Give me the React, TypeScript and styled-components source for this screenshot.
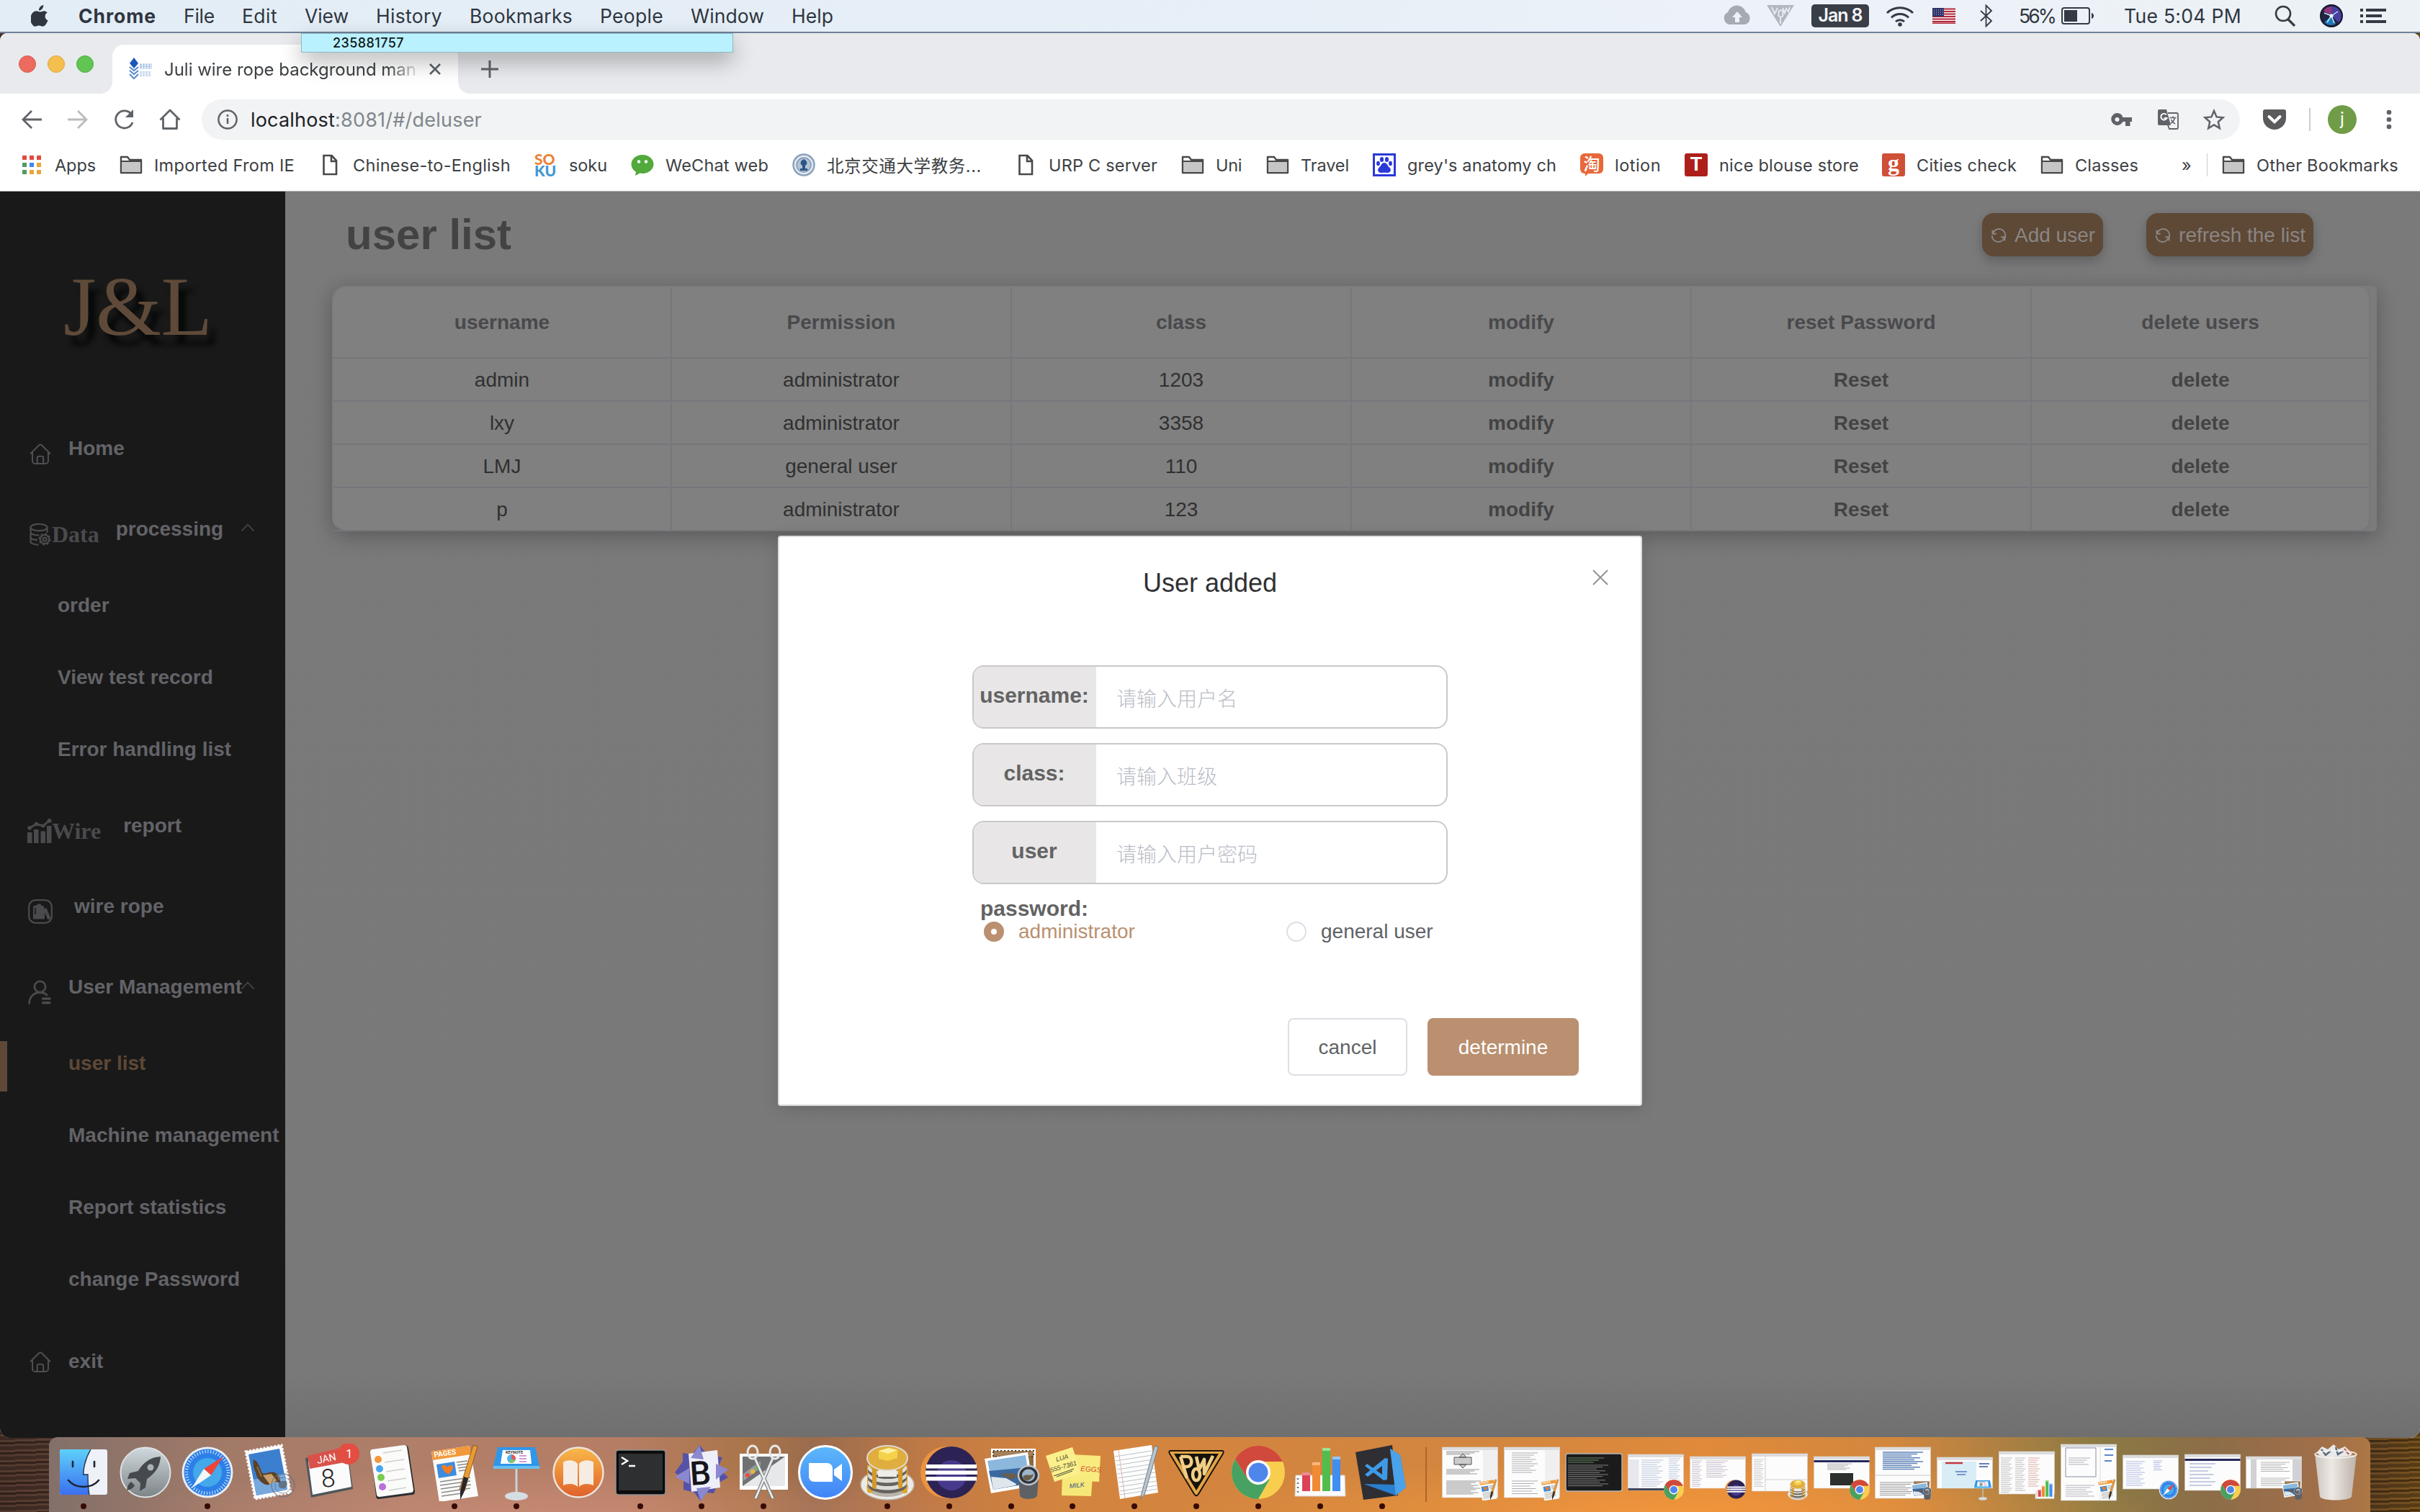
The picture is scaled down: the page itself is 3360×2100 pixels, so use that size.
import React, { useLayoutEffect, useRef } from "react";
import styled, { createGlobalStyle, css } from "styled-components";

const GlobalStyle = createGlobalStyle`
  *, *::before, *::after { box-sizing: border-box; }
  html, body { margin: 0; padding: 0; }
  body { width: 3360px; height: 2100px; overflow: hidden; font-family: "Liberation Sans", Arial, sans-serif; }
`;

const uiFont = `Inter, Roboto, "Noto Sans CJK SC", sans-serif`;
const pageFont = `"Liberation Sans", Arial, "Noto Sans CJK SC", sans-serif`;

/* Text that is tracked so that it fills a known column width */
const FitSpan = styled.span<{ $w: number }>`
  display: block;
  flex: none;
  width: ${(p) => p.$w}px;
  white-space: nowrap;
`;
function Fit({ w, children }: { w: number; children: string }) {
  const ref = useRef<HTMLSpanElement>(null);
  useLayoutEffect(() => {
    const el = ref.current;
    if (!el) return;
    el.style.letterSpacing = "0px";
    const range = document.createRange();
    range.selectNodeContents(el);
    const natural = range.getBoundingClientRect().width;
    el.style.letterSpacing = `${(w - natural) / children.length}px`;
  }, [w, children]);
  return (
    <FitSpan ref={ref} $w={w}>
      {children}
    </FitSpan>
  );
}

/* ---------- desktop ---------- */
const Desktop = styled.div`
  width: 3360px;
  height: 2100px;
  overflow: hidden;
  display: flex;
  flex-direction: column;
  background:
    repeating-linear-gradient(178deg, rgba(20, 8, 4, 0.5) 0 3px, rgba(90, 60, 45, 0.25) 3px 6px, rgba(30, 18, 14, 0.4) 6px 11px, rgba(110, 74, 50, 0.18) 11px 14px),
    linear-gradient(90deg, #4d362e 0, #583e34 80px, #6a4a22 3290px, #80591a 3360px);
`;
const MenuBar = styled.header`
  flex: none;
  height: 46px;
  padding: 0 47px 0 43px;
  display: flex;
  align-items: center;
  font: 400 26.5px/40px ${uiFont};
  color: #2f3640;
  background: linear-gradient(90deg, #e3edf6 0, #e7eff7 55%, #edf2fa 72%, #ecf1f5 100%);
  border-bottom: 2px solid #70829a;
`;
const MenuNames = styled.nav`
  display: flex;
  gap: 38px;
  margin-left: 41px;
  padding-bottom: 1px;
`;
const AppName = styled.div`
  font-weight: 700;
`;
const StatusArea = styled.div`
  margin-left: auto;
  display: flex;
  align-items: center;
`;
const Status = styled.div<{ $ml?: number }>`
  display: flex;
  margin-left: ${(p) => p.$ml ?? 0}px;
`;
const DateChip = styled(Status)`
  width: 80px;
  height: 32px;
  border-radius: 5px;
  justify-content: center;
  background: #3a3e47;
  color: #f3f5f8;
  font-weight: 600;
  font-size: 25px;
  line-height: 31px;
`;

/* ---------- browser window ---------- */
const Window = styled.main`
  position: relative;
  flex: none;
  height: 1951px;
  display: flex;
  flex-direction: column;
  border-radius: 10px 10px 14px 14px;
  overflow: hidden;
  background: #fff;
  font-family: ${uiFont};
`;
const TabStrip = styled.div`
  flex: none;
  height: 84px;
  display: flex;
  align-items: flex-end;
  background: #e8eaed;
`;
const Lights = styled.div`
  display: flex;
  gap: 16px;
  padding: 0 0 29px 26px;
  width: 156px;
`;
const Light = styled.i<{ $c: string; $b: string }>`
  width: 24px;
  height: 24px;
  border-radius: 50%;
  background: ${(p) => p.$c};
  border: 1px solid ${(p) => p.$b};
`;
const Tab = styled.div`
  position: relative;
  width: 480px;
  height: 68px;
  border-radius: 16px 16px 0 0;
  background: #fff;
  display: flex;
  align-items: center;
  padding-left: 23px;
  font-size: 24px;
  color: #3c4043;
  &::before, &::after {
    content: "";
    position: absolute;
    bottom: 0;
    width: 16px;
    height: 16px;
  }
  &::before { left: -16px; background: radial-gradient(circle at 0 0, transparent 15.5px, #fff 16px); }
  &::after { right: -16px; background: radial-gradient(circle at 100% 0, transparent 15.5px, #fff 16px); }
`;
const TabTitle = styled.div`
  margin-left: 16px;
  width: 350px;
  mask-image: linear-gradient(90deg, #000 310px, rgba(0, 0, 0, 0.15) 350px);
`;
const TabClose = styled.svg`
  margin-left: 17px;
`;
const NewTab = styled.div`
  display: flex;
  margin: 0 0 21px 31px;
`;
const Toolbar = styled.div`
  flex: none;
  height: 72px;
  display: flex;
  align-items: center;
  padding: 0 36px 0 27px;
`;
const NavIcons = styled.div`
  display: flex;
  gap: 30px;
  width: 253px;
`;
const Omnibox = styled.div`
  width: 2830px;
  height: 56px;
  border-radius: 28px;
  background: #f1f3f4;
  display: flex;
  align-items: center;
  padding: 0 21px;
  font-size: 27px;
  color: #202124;
`;
const Url = styled.div`
  display: flex;
  margin-left: 17px;
`;
const Muted = styled.span`
  color: #80868b;
`;
const OmniIcons = styled.div`
  margin-left: auto;
  display: flex;
  align-items: center;
  gap: 34px;
`;
const Pocket = styled.div`
  display: flex;
  margin-left: 32px;
`;
const Separator = styled.i<{ $ml: number }>`
  width: 2px;
  height: 32px;
  margin-left: ${(p) => p.$ml}px;
  background: #c9ccd0;
`;
const Avatar = styled.div`
  width: 40px;
  height: 40px;
  margin: 0 41px 0 24px;
  border-radius: 50%;
  background: #719c47;
  color: #fff;
  font-size: 24px;
  line-height: 37px;
  text-align: center;
`;
const Bookmarks = styled.div`
  flex: none;
  height: 64px;
  display: flex;
  align-items: center;
  gap: 33px;
  padding: 0 30px 9px 28px;
  font-size: 23.5px;
  color: #3c4043;
  border-bottom: 1px solid #b8b8b8;
`;
const Bookmark = styled.div<{ $ml?: number; $gap?: number }>`
  display: flex;
  align-items: center;
  gap: ${(p) => p.$gap ?? 16}px;
  margin-left: ${(p) => p.$ml ?? 0}px;
`;
const TileIcon = styled.i<{ $c: string }>`
  width: 32px;
  height: 32px;
  border-radius: 3px;
  background: ${(p) => p.$c};
  color: #fff;
  font: 700 27px/31px "Liberation Sans", sans-serif;
  text-align: center;
`;
const TaoTile = styled(TileIcon)`
  position: relative;
  height: 28px;
  margin-bottom: 4px;
  border-radius: 6px;
  font: 500 23px/26px "Noto Sans CJK SC", sans-serif;
  &::after {
    content: "";
    position: absolute;
    left: 7px;
    bottom: -4px;
    border: solid transparent;
    border-width: 4px 4px 0 0;
    border-top-color: ${(p) => p.$c};
  }
`;
const GTile = styled(TileIcon)`
  font: 700 32px/26px "Liberation Serif", serif;
`;
const Soku = styled.i`
  width: 32px;
  font: 900 21px/16px Lato, Roboto, sans-serif;
  color: #e8833a;
  letter-spacing: 0;
`;
const SokuLow = styled.b`
  display: block;
  font-weight: 900;
  color: #3f97d6;
`;
const SuggestBox = styled.div`
  position: absolute;
  z-index: 3;
  left: 418px;
  top: 46px;
  width: 600px;
  height: 27px;
  padding-left: 43px;
  background: #baf1fe;
  border: 1px solid #8fb8c2;
  font: 500 18px/26px ${uiFont};
  color: #10181a;
  box-shadow: 0 12px 30px rgba(0, 0, 0, 0.3);
`;

/* ---------- web page ---------- */
const Page = styled.div`
  flex: 1;
  display: flex;
  min-height: 0;
  font-family: ${pageFont};
  background: linear-gradient(180deg, #7a7a7a 0, #797979 1640px, #6f6f6f 1731px);
`;
const Sidebar = styled.aside`
  flex: none;
  width: 396px;
  background: #191919;
  color: #636368;
  font-weight: 700;
  font-size: 28px;
`;
const Logo = styled.div`
  height: 301px;
  padding: 95px 0 0 88px;
  font: 400 117px/130px "Liberation Serif", "Times New Roman", serif;
  letter-spacing: -0.5px;
  color: #5f4a39;
  text-shadow: 10px 14px 7px #060807;
`;
const NavTop = styled.div<{ $gap: number }>`
  height: 112px;
  display: flex;
  align-items: center;
  padding-left: 40px;
  white-space: nowrap;
  & > span { margin-left: ${(p) => p.$gap}px; }
`;
const NavLogout = styled(NavTop)`
  height: 128px;
`;
const NavIcon = styled.div<{ $drop?: number; $pull?: number }>`
  flex: none;
  height: 32px;
  margin-top: ${(p) => p.$drop ?? 14}px;
  margin-left: ${(p) => -(p.$pull ?? 0)}px;
  display: flex;
  align-items: center;
  color: #4a4a4d;
  font: 700 32px/32px "Liberation Serif", "Times New Roman", serif;
`;
const CaretBox = styled.svg<{ $ml: number }>`
  flex: none;
  margin: -4px 0 0 ${(p) => p.$ml}px;
`;
const NavSub = styled.div<{ $indent: number; $active?: boolean }>`
  height: 100px;
  display: flex;
  align-items: center;
  white-space: nowrap;
  ${(p) =>
    p.$active
      ? css`
          color: #5f4836;
          &::before { content: ""; width: 10px; height: 70px; margin: 8px ${p.$indent - 10}px 0 0; background: #5f4836; }
        `
      : css`
          padding-left: ${p.$indent}px;
        `}
`;
const Content = styled.section`
  flex: 1;
  padding-left: 65px;
`;
const Head = styled.div`
  height: 118px;
  display: flex;
  align-items: center;
  padding-right: 148px;
`;
const Title = styled.h1`
  margin: 2px auto 0 19px;
  font-size: 60px;
  line-height: 70px;
  color: #434343;
`;
const HeadButton = styled.button<{ $w: number }>`
  width: ${(p) => p.$w}px;
  height: 60px;
  margin: 2px 0 0 60px;
  padding: 1px 0 0;
  border: 0;
  border-radius: 16px;
  display: flex;
  align-items: center;
  justify-content: center;
  gap: 10px;
  background: #5e4836;
  color: #8a8683;
  font: 400 28px/59px ${pageFont};
  box-shadow: 0 8px 16px rgba(0, 0, 0, 0.18), 0 0 8px rgba(0, 0, 0, 0.06);
`;
const TableCard = styled.div`
  width: 2839px;
  height: 341px;
  margin-top: 13px;
  border-radius: 20px 6px 6px 20px;
  background: #7b7b7b;
  box-shadow: 0 8px 30px rgba(0, 0, 0, 0.22), 0 0 24px rgba(0, 0, 0, 0.06);
`;
const Table = styled.div`
  width: 2830px;
  height: 341px;
  border: 2px solid #76767b;
  border-top-color: #7c7c7f;
  border-left-color: #7c7c7f;
  border-radius: 20px 16px 16px 20px;
  background: #808080;
`;
const Row = styled.div<{ $head?: boolean }>`
  display: grid;
  grid-template-columns: 470px repeat(4, 472px) 1fr;
  height: ${(p) => (p.$head ? 99 : 60)}px;
`;
const Cell = styled.div<{ $kind: "head" | "text" | "link" }>`
  display: flex;
  align-items: center;
  justify-content: center;
  padding-top: 1px;
  border-right: 2px solid #78787c;
  border-bottom: 2px solid #76767c;
  font-size: 28px;
  font-weight: ${(p) => (p.$kind === "text" ? 400 : 700)};
  color: ${(p) => (p.$kind === "head" ? "#49494c" : p.$kind === "text" ? "#303030" : "#434343")};
  &:last-child { border-right: 0; }
`;

/* ---------- dialog ---------- */
const Dialog = styled.div`
  position: absolute;
  left: 1080px;
  top: 698px;
  width: 1200px;
  height: 792px;
  border: 2px solid #dcdcde;
  border-radius: 4px;
  background: #fff;
  box-shadow: 0 4px 24px rgba(0, 0, 0, 0.14);
  font-family: ${pageFont};
  display: flex;
  flex-direction: column;
`;
const DialogHead = styled.div`
  height: 178px;
  padding: 39px 44px 0;
  display: grid;
  grid-template-columns: 1fr auto 1fr;
  font-size: 36px;
  line-height: 50px;
  color: #303133;
`;
const CloseIcon = styled.svg`
  grid-column: 3;
  justify-self: end;
  margin-top: 5px;
`;
const DialogTitle = styled.div`
  grid-column: 2;
`;
const Field = styled.div`
  width: 660px;
  height: 88px;
  margin: 0 0 20px 268px;
  border: 2px solid #c9c8ca;
  border-radius: 16px;
  display: flex;
`;
const FieldLabel = styled.div`
  width: 170px;
  height: 84px;
  padding-right: 2px;
  border-radius: 13px 0 0 13px;
  background: #e8e6e7;
  color: #636363;
  font-size: 30px;
  font-weight: 700;
  line-height: 80px;
  text-align: center;
`;
const Placeholder = styled.span`
  margin-left: 28px;
  line-height: 86px;
  font-size: 28px;
  font-family: "Noto Sans CJK SC", sans-serif;
  font-weight: 300;
  color: #b9bdc6;
`;
const Radios = styled.div`
  height: 40px;
  margin: 26px 0 100px 284px;
  display: flex;
`;
const Radio = styled.label<{ $on?: boolean; $w: number }>`
  width: ${(p) => p.$w}px;
  display: flex;
  align-items: center;
  gap: 20px;
  font-size: 28px;
  white-space: nowrap;
  color: ${(p) => (p.$on ? "#ba9070" : "#606266")};
  &::before {
    content: "";
    width: 28px;
    height: 28px;
    border-radius: 50%;
    border: ${(p) => (p.$on ? "10px solid #ba9070" : "2px solid #dcdfe6")};
  }
`;
const Actions = styled.div`
  display: flex;
  justify-content: flex-end;
  gap: 28px;
  padding-right: 86px;
`;
const ActionButton = styled.button<{ $primary?: boolean; $w: number }>`
  width: ${(p) => p.$w}px;
  height: 80px;
  padding: 1px 0 0;
  border-radius: 8px;
  border: 2px solid ${(p) => (p.$primary ? "#ba9070" : "#dcdfe6")};
  background: ${(p) => (p.$primary ? "#ba9070" : "#fff")};
  color: ${(p) => (p.$primary ? "#fff" : "#606266")};
  font: 400 28px/75px ${pageFont};
`;

/* ---------- dock ---------- */
const Dock = styled.footer`
  position: relative;
  flex: none;
  width: 3223px;
  height: 104px;
  margin: -1px 0 0 68px;
  padding: 9px 0 0 5px;
  border-radius: 12px 12px 0 0;
  display: flex;
  background:
    radial-gradient(ellipse 700px 80px at 2250px 110px, rgba(250, 155, 60, 0.7), transparent),
    radial-gradient(ellipse 600px 70px at 700px 110px, rgba(210, 145, 125, 0.6), transparent),
    linear-gradient(90deg, #83706a 0, #a27a68 250px, #b07f69 500px, #b67d64 800px, #ab7549 970px, #9a6c4e 1060px, #c27a45 1230px, #d3843e 1400px, #d2863f 2000px, #e08a3b 2300px, #d2873e 2560px, #b08142 2700px, #8b7a44 2850px, #8c6d48 3000px, #a06f4a 3150px, #ad7745 3223px);
`;
const Slot = styled.div<{ $dot?: boolean }>`
  flex: none;
  width: 85.85px;
  height: 95px;
  display: flex;
  flex-direction: column;
  align-items: center;
  ${(p) =>
    p.$dot &&
    css`
      &::after { content: ""; width: 8px; height: 8px; margin-top: 3px; border-radius: 50%; background: #360a04; }
    `}
`;
const DockRule = styled.i`
  width: 2px;
  height: 76px;
  margin: 5px 18px 0 17px;
  background: #b06528;
`;

const S = ({ w, h = w, vb, children }: { w: number; h?: number; vb?: string; children: React.ReactNode }) => (
  <svg width={w} height={h} viewBox={vb ?? `0 0 ${w} ${h}`} fill="none">
    {children}
  </svg>
);

/* ---------- small icons ---------- */
const Apple = () => (
  <S w={25} h={31} vb="0 0 25 31">
    <path fill="#2f3640" d="M17.3 0c.2 2-.6 3.9-1.700 5.200C14.400 6.600 12.600 7.600 11 7.500c-.2-1.900.7-3.900 1.800-5.100C14 1 15.900.1 17.300 0zM22.600 10.600c-1.800 1.100-3 2.800-3 5.100 0 2.600 1.600 4.700 3.900 5.600-.5 1.600-1.200 3.100-2.200 4.500-1.300 2-2.700 3.900-4.900 4-2.100 0-2.800-1.300-5.300-1.300s-3.200 1.200-5.200 1.300c-2.100.1-3.700-2.100-5-4.100C-1.700 21.600-1 14.500 2 11.100c1.500-1.700 3.400-2.800 5.500-2.800 2.200 0 3.600 1.300 5.400 1.300 1.700 0 2.800-1.300 5.400-1.300 1.800 0 3.300.9 4.300 2.300z" />
  </S>
);
const Folder = () => (
  <S w={32}>
    <path d="M2 27V5h9l3 4h16v18z" fill="#fff" stroke="#484848" strokeWidth="2.400" strokeLinejoin="round" />
    <path d="M3 12h26v14H3z" fill="#c6c6c6" />
    <path d="M2 11h28" stroke="#484848" strokeWidth="2.200" />
  </S>
);
const Doc = () => (
  <S w={32}>
    <path d="M7.500 3h11l6.500 7v19H7.500z M18 3v8h7" stroke="#484848" strokeWidth="2.600" />
  </S>
);
const House = () => (
  <S w={32}>
    <path d="M2.700 15.800 14.200 4.300a2.500 2.500 0 0 1 3.600 0L29.300 15.800 M5 13.800V26a4 4 0 0 0 4 4h14a4 4 0 0 0 4-4V13.800 M11.700 29.500v-8a1.700 1.700 0 0 1 1.700-1.700h5a1.700 1.700 0 0 1 1.700 1.700v8" stroke="#4e4e52" strokeWidth="2.100" strokeLinecap="round" />
  </S>
);
const Database = () => (
  <S w={32}>
    <g stroke="#4a4a4d" strokeWidth="2.300">
      <ellipse cx="14" cy="6.500" rx="11.500" ry="4.700" />
      <path d="M2.500 6.500v20c0 2 5 4 11 4.200M25.500 6.500V14M2.500 13c0 3 6 4.600 12 4.300M2.500 20c0 2.300 5 4 9.500 4" />
      <circle cx="22" cy="23" r="6.200" />
      <circle cx="22" cy="23" r="2.400" />
      <circle cx="22" cy="23" r="7.300" strokeWidth="2.400" strokeDasharray="2.900 2.830" />
    </g>
  </S>
);
const Chart = () => (
  <S w={34}>
    <path fill="#4a4a4d" d="M0 19h6.500v15H0zM9 15h6.500v19H9zM18.500 17.500H25V34h-6.500zM27 10h6.500v24H27z" />
    <path d="m3 13 9.500-5.500L22 10l8.500-7.500" stroke="#4a4a4d" strokeWidth="3" />
    <g fill="#4a4a4d"><circle cx="3" cy="13" r="2.800" /><circle cx="12.500" cy="7.500" r="2.800" /><circle cx="22" cy="10" r="2.500" /><circle cx="30.500" cy="3" r="3" /></g>
  </S>
);
const Books = () => (
  <S w={34}>
    <rect x="1.200" y="1.200" width="31.600" height="31.600" rx="9" stroke="#4a4a4d" strokeWidth="2.300" />
    <path fill="#4a4a4d" d="M7 9.500 12.500 8V6.500h5.500V9h4v4l3.500-1 6 14.500-4 2-4.500-10v9H7z" />
    <path d="M10 12v9" stroke="#191919" strokeWidth="1.600" />
  </S>
);
const Person = () => (
  <S w={34}>
    <g stroke="#4a4a4d" strokeWidth="2.800" strokeLinecap="round">
      <circle cx="17.500" cy="9.500" r="7.600" />
      <path d="M2.500 32.500C3 23.500 9 17.500 17 17.500c4.500 0 8 1.400 10.200 3.600" />
      <path d="M21.500 26h9.500M21.500 31.800h9.500" strokeWidth="3.400" />
    </g>
  </S>
);
const Caret = ({ ml }: { ml: number }) => (
  <CaretBox $ml={ml} width="20" height="12" viewBox="0 0 20 12" fill="none">
    <path d="m1.500 10.500 8.500-9 8.500 9" stroke="#4d4d51" strokeWidth="1.500" />
  </CaretBox>
);
const Refresh = () => (
  <S w={24} h={24} vb="0 0 24 24">
    <path d="M3.500 4.500v5.300h5.200M4 9.500C5.700 5 8.500 3 12.500 3c5 0 8.800 4 8.800 9 0 1.200-.2 2.200-.6 3.200M20.500 19.500v-5.300h-5.200M20 14.500C18.300 19 15.500 21 11.500 21c-5 0-8.800-4-8.800-9" stroke="#8a8683" strokeWidth="1.900" />
  </S>
);
const Chrome = ({ s = 80 }: { s?: number }) => (
  <svg width={s} height={s} viewBox="0 0 80 80">
    <circle cx="40" cy="40" r="37" fill="#f9ce4f" />
    <path d="M8 21.500 25 49l8-24h39A37 37 0 0 0 8 21.500z" fill="#d1493c" />
    <path d="M8 21.500A37 37 0 0 0 40 77l16-28-16 8-15-8z" fill="#47a162" />
    <path d="M8 21.500A37 37 0 0 1 72 21.500L74 25H40L25 44 9 20z" fill="#d1493c" />
    <circle cx="40" cy="40" r="17" fill="#fff" />
    <circle cx="40" cy="40" r="13.500" fill="#4f86ec" />
  </svg>
);
const Eclipse = ({ s = 80 }: { s?: number }) => (
  <svg width={s} height={s} viewBox="0 0 80 80">
    <circle cx="36" cy="40" r="36" fill="#eb9440" />
    <circle cx="43" cy="40" r="36" fill="#2c2254" />
    <circle cx="43" cy="44" r="21" fill="#473a8c" />
    <path fill="#fff" d="M8 29h70v5.500H8zM7 37.500h72V43H7zM8 46h70v5.500H8z" />
  </svg>
);
const Safari = ({ s = 80 }: { s?: number }) => (
  <svg width={s} height={s} viewBox="0 0 80 80">
    <circle cx="40" cy="40" r="35.500" fill="#e9eef2" />
    <circle cx="40" cy="40" r="32.500" fill="#2d7fe8" />
    <circle cx="40" cy="40" r="20" fill="#43a9ea" />
    <circle cx="40" cy="40" r="29" fill="none" stroke="#e6f3ff" strokeWidth="4.500" strokeDasharray="1 2.800" />
    <path d="M62 18 35 35l10 9z" fill="#f0433a" />
    <path d="M18 62 35 35l10 9z" fill="#f5f6f8" />
  </svg>
);
const Pages = ({ s = 80 }: { s?: number }) => (
  <svg width={s} height={s} viewBox="0 0 80 80">
    <path d="m8 11 53-8 12 70-54 8z" fill="#fbfbfa" />
    <path d="m8 11 53-8 2 12-53 8z" fill="#f2993a" />
    <text x="12" y="19" fontSize="10" fontWeight="700" fill="#fff" fontFamily="Roboto, sans-serif" transform="rotate(-8 12 19)">PAGES</text>
    <path d="m15 29 25-4 3 19-25 4z" fill="#3b8de0" />
    <path d="M22 31c5-4 8 2 8 2s5-6 8-1c1 4-5 8-6 11-4-2-9-7-10-12z" fill="#f47c20" />
    <path d="m43 26 15-2m-14 6 15-2m-14 6 15-2m-14 6 15-2M20 53l42-6M20 58l42-6M21 63l42-6M22 68l40-6M22 73l28-4" stroke="#8a8a8a" strokeWidth="1.500" />
    <path d="m66 2 6 2-18 62-7-2z" fill="#e99b33" stroke="#8b5a22" />
    <path d="m53 46 6 2-6 20-5 10 0-12z" fill="#26282c" />
  </svg>
);
const Keynote = ({ s = 80 }: { s?: number }) => (
  <svg width={s} height={s} viewBox="0 0 80 80">
    <path d="M38.500 32h3v42h-3z" fill="#c9d2da" />
    <ellipse cx="40" cy="73" rx="16" ry="6" fill="#d5dde3" />
    <path d="M14 5h52l6 26H8z" fill="#2f96e8" />
    <path d="M8 31h64v4H8z" fill="#66c0f2" />
    <path d="M21 9h38l2 19H18z" fill="#fff" />
    <text x="25" y="14" fontSize="5.500" fontWeight="700" fill="#333" fontFamily="Roboto, sans-serif">KEYNOTE</text>
    <circle cx="33" cy="21" r="6" fill="#43b8f5" />
    <path d="M33 21v-6a6 6 0 0 1 5.500 8z" fill="#ef5350" />
    <path d="m33 21 5 3a6 6 0 0 1-8 2z" fill="#8bc34a" />
    <path d="M44 17h10M44 21h10M44 25h10" stroke="#d59ad9" strokeWidth="2" />
  </svg>
);
const Pancakes = ({ s = 80 }: { s?: number }) => (
  <svg width={s} height={s} viewBox="0 0 80 80">
    <ellipse cx="40" cy="57" rx="37" ry="21" fill="#eceae6" stroke="#b9b3a9" strokeWidth="1.500" />
    <ellipse cx="40" cy="60" rx="29" ry="14" fill="#b9b4ab" />
    <path d="M12 30h9v34c0 5-9 7-9 1zM59 30h9v36c0 5-9 4-9-1z" fill="#dca62f" />
    {[58, 48, 38].map((y) => (
      <g key={y}>
        <ellipse cx="40" cy={y} rx="27" ry="11" fill="#66625e" />
        <ellipse cx="40" cy={y - 3.500} rx="27" ry="10" fill="#dedcd8" />
      </g>
    ))}
    <path d="M12 20h56c0 9-4 12-7 16v24c-2 4-6 3-6-2V38H25v21c0 5-5 5-6 1V36c-3-4-7-8-7-16z" fill="#d59a28" />
    <path d="M27 38c4-6 22-6 26 0v8H27z" fill="#efedea" />
    <ellipse cx="40" cy="20" rx="28" ry="17" fill="#e0ae3f" stroke="#dcd9d2" strokeWidth="2" />
    <path d="m28 10 14-4 12 3v11l-13 4-13-3z" fill="#f5d24a" />
    <path d="m28 10 13 4 13-5-12-3z" fill="#fdf0a0" />
  </svg>
);
const Preview = ({ s = 80 }: { s?: number }) => (
  <svg width={s} height={s} viewBox="0 0 80 80">
    <path d="M12 7h62v44H12z" fill="#fff" />
    <path d="M15 10h56v38H15z" fill="#8a6a3f" />
    <path d="M15 10h56v8H15z" stroke="#4f3c25" strokeWidth="2" strokeDasharray="2 3" fill="#a3825a" />
    <path d="m3 21 60-9 7 47-58 10z" fill="#fff" />
    <path d="m7 24 53-8 6 39-51 9z" fill="#8cb8de" />
    <path d="m9 38 54-5 3 22-51 9z" fill="#3a68a0" />
    <path d="m12 46 21 2 14 8-1 2-31 6z" fill="#dfe6ec" />
    <path d="m24 42 20-1 6 5-10 4z" fill="#6b5d4c" />
    <path d="M50 46h28l-2 26c-1 6-22 7-24 0z" fill="#5d6166" />
    <ellipse cx="64" cy="44" rx="14" ry="13" fill="#2f3439" stroke="#bfc5ca" strokeWidth="2.500" />
    <ellipse cx="64" cy="44" rx="9" ry="8.500" fill="#9cb6cc" />
    <path d="M56 46c5-5 9 0 15-4-2 10-13 13-15 4z" fill="#6b5d4c" />
  </svg>
);
const Numbers = ({ s = 80 }: { s?: number }) => (
  <svg width={s} height={s} viewBox="0 0 80 80">
    <path d="M6 44h68l1 29H5z" fill="#fbfbfb" stroke="#d5d0ca" />
    <path d="M9 48v20" stroke="#777" strokeWidth="2.500" strokeDasharray="2 4" />
    <path d="M15 40h11v26H15z" fill="#dd4255" /><path d="M15 40h11v4H15z" fill="#f08a92" />
    <path d="M29 26h11v40H29z" fill="#f08a35" /><path d="M29 26h11v4H29z" fill="#fbb77c" />
    <path d="M43 6h11v60H43z" fill="#52bd4d" /><path d="M43 6h11v4H43z" fill="#9ce294" />
    <path d="M57 18h11v48H57z" fill="#3f8ef0" /><path d="M57 18h11v4H57z" fill="#93c7fb" />
  </svg>
);

const DockIcon = ({ children }: { children: React.ReactNode }) => (
  <svg width="80" height="80" viewBox="0 0 80 80" fill="none">{children}</svg>
);

const apps: { id: string; dot: boolean; art: React.ReactNode }[] = [
  { id: "finder", dot: true, art: (
    <DockIcon>
      <defs><linearGradient id="fnd" x1="0" y1="0" x2="0" y2="1"><stop stopColor="#5ed0fa" /><stop offset="1" stopColor="#3a6ff0" /></linearGradient></defs>
      <rect x="7" y="8" width="66" height="63" rx="3" fill="#eef1f8" />
      <path d="M10 8h40c-7 12-9 24-9.500 35H46c0 8 0 18 2 28H10a3 3 0 0 1-3-3V11a3 3 0 0 1 3-3z" fill="url(#fnd)" />
      <path d="M50 8c-7 12-10 24-10.500 35H46c0 8 0 18 2 28" stroke="#22324a" strokeWidth="1.300" />
      <path d="M25 25v7M55 25v7M19 51c10 12 32 12 42 0" stroke="#1c2430" strokeWidth="2.600" strokeLinecap="round" />
    </DockIcon>) },
  { id: "launchpad", dot: false, art: (
    <DockIcon>
      <defs><linearGradient id="lp" x1="0" y1="0" x2="0" y2="1"><stop stopColor="#d0d9de" /><stop offset="1" stopColor="#7d8486" /></linearGradient></defs>
      <circle cx="40" cy="40" r="34.500" fill="url(#lp)" stroke="#dfe3e5" strokeWidth="2" />
      <path d="M61 18c-14 1-24 8-31 20l-12 3-3 8 11-1 7 7-1 11 8-5 2-12c12-8 18-17 19-31zM20 53c-4 3-5 7-6 12 5-1 9-3 11-7z" fill="#46494d" />
      <circle cx="47" cy="33" r="4.500" fill="#aab2b6" />
    </DockIcon>) },
  { id: "safari", dot: true, art: <Safari /> },
  { id: "mail", dot: false, art: (
    <DockIcon>
      <path d="m8 11 50-9 13 66-50 9z" fill="#fff" stroke="#fff" strokeWidth="3" strokeDasharray="3 2" />
      <path d="m12 15 43-8 11 57-43 8z" fill="#3c7fce" /><path d="m19 50 44-8 3 22-43 8z" fill="#77a9de" />
      <path d="M19 22c7 3 9 12 12 19 6 2 10-3 17-1 6 3 9 8 8 15-6-3-9-2-12 0-3 3-8 3-12 0-6-4-9-9-10-15-3-5-4-12-3-18z" fill="#5a4128" />
      <path d="m32 44 12-2 7 9-9 6z" fill="#c9a06b" />
      <path d="m24 32 6 14M52 43l3 8" stroke="#8a6a44" strokeWidth="2" />
      <circle cx="60" cy="58" r="16" stroke="#66707a" strokeWidth="1.500" opacity=".7" /><circle cx="60" cy="58" r="11" stroke="#66707a" opacity=".7" />
      <path d="M60 52c5-2 7 2 5 7-2 4-4 4-6 3-4 1-6-3-5-7 1-3 4-3 6-3z" fill="#5b6570" opacity=".8" />
    </DockIcon>) },
  { id: "calendar", dot: false, art: (
    <DockIcon>
      <path d="m5 20 58-13 8 56-58 12z" fill="#4e565b" />
      <path d="M9 25 63 12l6 48-54 11z" fill="#fbfbfb" /><path d="m8 17 53-13 4 21-54 10z" fill="#d8524a" />
      <text x="22" y="28" fontSize="14" fill="#fff" fontFamily="Roboto, sans-serif" transform="rotate(-11 22 28)">JAN</text>
      <text x="28" y="61" fontSize="35" fill="#222" fontFamily="Roboto, sans-serif" fontWeight="300" transform="rotate(-5 28 61)">8</text>
      <circle cx="65" cy="14" r="15" fill="#e44d41" /><text x="61" y="20" fontSize="17" fill="#fff" fontFamily="Roboto, sans-serif">1</text>
    </DockIcon>) },
  { id: "reminders", dot: false, art: (
    <DockIcon>
      <path d="m11 9 46-7c3 0 4 1 5 4l9 60c0 3-1 5-4 5l-46 6c-3 0-4-2-4-5L10 13c0-2 0-4 1-4z" fill="#2d2f31" />
      <path d="m12 8 44-6c2 0 4 1 4 3l9 59c0 2-1 4-3 4l-44 6c-2 0-4-1-4-3L9 12c0-2 1-4 3-4z" fill="#fbfbfa" />
      <circle cx="20" cy="22" r="5" fill="#f5973c" /><circle cx="22" cy="35" r="5" fill="#49a3f2" /><circle cx="24" cy="47" r="5" fill="#79cc4c" /><circle cx="26" cy="60" r="5" fill="#ba6fdb" />
      <path d="m27 13 26-4M29 26l27-4M31 39l26-4M33 52l26-4M35 65l24-4" stroke="#cfcfcf" strokeWidth="1.500" />
    </DockIcon>) },
  { id: "pages", dot: true, art: <Pages /> },
  { id: "keynote", dot: true, art: <Keynote /> },
  { id: "books", dot: false, art: (
    <DockIcon>
      <defs><linearGradient id="bk" x1="0" y1="0" x2="0" y2="1"><stop stopColor="#f8b94a" /><stop offset="1" stopColor="#e0602a" /></linearGradient></defs>
      <circle cx="40" cy="40" r="34.500" fill="url(#bk)" stroke="#ece3de" strokeWidth="2.500" />
      <path d="M39 28c-4-6-16-6-20-2v32c6-3 16-3 20 2zM41 28c4-6 16-6 20-2v32c-6-3-16-3-20 2z" fill="#f7ece4" />
    </DockIcon>) },
  { id: "terminal", dot: true, art: (
    <DockIcon>
      <rect x="6" y="9" width="69" height="62" rx="4" fill="#0c0c0c" stroke="#8d9294" strokeWidth="1.500" /><rect x="10" y="14" width="61" height="51" fill="#2d2f30" />
      <path d="m14 19 8 5-8 5M24 31h9" stroke="#fff" strokeWidth="2.500" />
    </DockIcon>) },
  { id: "bbedit", dot: true, art: (
    <DockIcon>
      <path d="m37 2 12 14 20 3-6 14 14 14-14 8-6 14-10-1-8 12-9-12-15-4 0-13L3 40l11-15 0-12 13 2z" fill="#5552a8" />
      <path d="m22 14 40-5 4 52-40 6z" fill="#eeeef8" /><path d="m37 2 6 20-18-2zM39 80l-6-18 20-2zM3 46l20-12v22zM77 36 60 50V28z" fill="#8b88cf" />
      <text x="25" y="58" fontSize="46" fontWeight="500" fill="#15151a" fontFamily="Roboto, sans-serif" transform="rotate(-4 25 58)">B</text>
    </DockIcon>) },
  { id: "capture", dot: true, art: (
    <DockIcon>
      <rect x="7" y="14" width="67" height="50" fill="#fff" /><rect x="11" y="18" width="59" height="41" fill="#707173" /><path d="m11 59 59-41v41z" fill="#e7e8e9" />
      <path d="m12 42 24-18v10L12 52z" fill="#9b9c9d" /><circle cx="18" cy="44" r="3" fill="#ea4c3c" /><circle cx="25" cy="39" r="3" fill="#f0b536" /><circle cx="32" cy="34" r="3" fill="#66bb4a" />
      <path d="M28 20 53 76M53 20 29 76" stroke="#6f7479" strokeWidth="5" /><path d="M28 20 53 76M53 20 29 76" stroke="#e6e8ea" strokeWidth="3" />
      <ellipse cx="25" cy="12" rx="7" ry="9" stroke="#e6e8ea" strokeWidth="3" /><ellipse cx="56" cy="12" rx="7" ry="9" stroke="#e6e8ea" strokeWidth="3" />
    </DockIcon>) },
  { id: "zoom", dot: false, art: (
    <DockIcon>
      <defs><linearGradient id="zm" x1="0" y1="0" x2="0" y2="1"><stop stopColor="#5cb9fa" /><stop offset="1" stopColor="#4183f6" /></linearGradient></defs>
      <circle cx="40" cy="40" r="36.500" fill="url(#zm)" stroke="#fff" strokeWidth="3" />
      <path d="M17 27h25c5 0 8 3 8 8v18H25c-5 0-8-3-8-8zM52 36l11-8v24l-11-8z" fill="#fff" />
    </DockIcon>) },
  { id: "sequel", dot: true, art: <Pancakes /> },
  { id: "eclipse", dot: true, art: <Eclipse /> },
  { id: "preview", dot: true, art: <Preview /> },
  { id: "stickies", dot: true, art: (
    <DockIcon>
      <path d="m26 42 42 2-2 29-41-1z" fill="#f6e878" /><path d="m38 15 41 2-2 36-40-2z" fill="#f9ec7e" /><path d="m3 17 37-12 12 36-37 12z" fill="#fbf08c" />
      <text x="18" y="25" fontSize="9" fill="#4a4a30" fontFamily="Liberation Sans, sans-serif" fontStyle="italic" transform="rotate(-15 18 25)">LUA</text>
      <text x="10" y="40" fontSize="9" fill="#4a4a30" fontFamily="Liberation Sans, sans-serif" fontStyle="italic" transform="rotate(-16 10 40)">555-7361</text>
      <text x="51" y="38" fontSize="10" fill="#d34a2e" fontFamily="Liberation Sans, sans-serif" fontStyle="italic" transform="rotate(4 51 38)">EGGS</text>
      <text x="36" y="62" fontSize="9" fill="#33508f" fontFamily="Liberation Sans, sans-serif" fontStyle="italic" transform="rotate(-6 36 62)">MILK</text>
      <path d="m14 45 28-10M18 46l22-8" stroke="#4a4a30" />
    </DockIcon>) },
  { id: "textedit", dot: true, art: (
    <DockIcon>
      <path d="m11 10 53-8 9 66-53 9z" fill="#fdfdfc" />
      <path d="m13 18 51-8M14 24l51-8M15 30l51-8M16 36l51-8M16 42l52-8M17 48l52-8M18 54l52-8M19 60l52-8M20 66l52-8M20 71l52-8" stroke="#b9c2cc" strokeWidth="1" /><path d="m18 9 9 67" stroke="#e5b4b0" />
      <path d="m68 3 5 2-19 66-5 6 1-8z" fill="#b8c4cf" stroke="#6f7a84" />
    </DockIcon>) },
  { id: "pow", dot: true, art: (
    <DockIcon>
      <path d="M4 10h72c2 0 2 2 1 4L43 70c-2 3-4 3-6 0L3 14c-1-2-1-4 1-4z" fill="#e2a545" stroke="#20160a" strokeWidth="2" /><path d="M9 14h62L40 65z" fill="#15110c" />
      <g fill="none" stroke="#f1cf86" strokeWidth="4.600" strokeLinejoin="round">
        <path d="M18 18h10c7 1 7 13 0 14h-5M18 18l9 30" />
        <ellipse cx="40" cy="43" rx="5" ry="8" />
        <path d="m40 18 4 18 7-14 0 20 12-25" />
      </g>
    </DockIcon>) },
  { id: "chrome", dot: true, art: <Chrome /> },
  { id: "numbers", dot: true, art: <Numbers /> },
  { id: "code", dot: true, art: (
    <DockIcon>
      <path d="m3 12 51-10 8 70-48 6z" fill="#2e2e33" /><path d="m51 7 14 9 8 45-14 11-45-16 44 1z" fill="#2b7fcf" /><path d="m51 7 14 9 8 45-14 11z" fill="#4aa2ea" />
      <path d="m44 20 4 1-1 29-5 1-26-20 3-3 21 15V31L20 46l-4-3z" fill="#3f9ae6" />
    </DockIcon>) },
];

/* Minimised windows: page outline, text rows, badge of the owning app */
type Mini = { id: string; y: number; h: number; kind: string; badge?: React.ReactNode };
const minis: Mini[] = [
  { id: "m1", y: 5, h: 70, kind: "gear", badge: <Pages s={30} /> },
  { id: "m2", y: 5, h: 70, kind: "doc", badge: <Pages s={30} /> },
  { id: "m3", y: 14, h: 52, kind: "term" },
  { id: "m4", y: 15, h: 50, kind: "web", badge: <Chrome s={30} /> },
  { id: "m5", y: 18, h: 44, kind: "ide", badge: <Eclipse s={29} /> },
  { id: "m6", y: 14, h: 52, kind: "table", badge: <Pancakes s={30} /> },
  { id: "m7", y: 18, h: 44, kind: "navy", badge: <Chrome s={30} /> },
  { id: "m8", y: 5, h: 71, kind: "blue", badge: <Preview s={30} /> },
  { id: "m9", y: 19, h: 43, kind: "slide", badge: <Keynote s={30} /> },
  { id: "m10", y: 11, h: 59, kind: "sheet", badge: <Numbers s={30} /> },
  { id: "m11", y: 1, h: 78, kind: "form", badge: <Pages s={30} /> },
  { id: "m12", y: 16, h: 47, kind: "links", badge: <Safari s={30} /> },
  { id: "m13", y: 15, h: 50, kind: "navy2", badge: <Chrome s={30} /> },
  { id: "m14", y: 18, h: 44, kind: "pdf", badge: <Preview s={30} /> },
];
const lines = (x: number, w: number, y: number, h: number, step = 3) => {
  let d = "";
  for (let i = 0, yy = y; yy < y + h; i++, yy += step) d += `M${x} ${yy}h${w - ((i * 7) % 5) * (w / 14)}`;
  return d;
};
function MiniWindow({ m }: { m: Mini }) {
  const { y, h, kind } = m;
  if (kind === "term")
    return (
      <DockIcon>
        <rect x="1" y={y} width="78" height={h} rx="3" fill="#1b1b1b" stroke="#b5b5b5" strokeWidth="1.500" />
        <path d={lines(4, 50, y + 6, 8)} stroke="#6a8f6a" />
        <path d={lines(4, 56, y + 16, 30, 2.600)} stroke="#8c8c8c" strokeWidth=".9" />
      </DockIcon>
    );
  return (
    <DockIcon>
      <rect x="1.500" y={y} width="77" height={h} fill="#fcfcfc" stroke="#d8cfc8" strokeWidth=".6" />
      <rect x="1.500" y={y} width="77" height="4" fill="#dcdcde" />
      {kind === "gear" && (<><path d="M58 9h20v66H58z" fill="#f0f0f0" /><path d={lines(7, 46, y + 6, 5, 2) + lines(7, 46, 36, 7, 2) + lines(7, 48, 52, 20, 2)} stroke="#8e8e8e" strokeWidth=".9" /><path d="M18 19h24v10H18zM30 14l5 5H25zM30 34l5-5H25z" stroke="#555" fill="#ccc" /></>)}
      {kind === "doc" && (<><path d="M58 9h20v66H58z" fill="#f0f0f0" /><path d={lines(12, 36, y + 8, 28, 3) + lines(12, 36, 52, 20, 3.500)} stroke="#a5a5a5" strokeWidth=".9" /></>)}
      {kind === "web" && (<><path d="M1.500 62h77v3h-77z" fill="#42475a" /><path d="M1.500 22h15v40h-15z" fill="#e6e8ee" /><path d={lines(20, 30, y + 8, 38, 3) + lines(58, 16, y + 6, 38, 3)} stroke="#a3b2d2" strokeWidth=".8" /></>)}
      {kind === "ide" && <path d={lines(4, 14, y + 6, 36, 2.500) + lines(24, 30, y + 6, 24, 2.500)} stroke="#b9afc0" strokeWidth=".8" />}
      {kind === "table" && (<><path d={lines(4, 14, y + 8, 40, 2.500)} stroke="#bdbdbd" strokeWidth=".8" /><path d={`M20 ${y + 4}v48M20 50h58`} stroke="#d0d0d0" /></>)}
      {kind === "navy" && (<><path d="M1.500 23h77v3h-77z" fill="#26295c" /><path d={lines(20, 34, y + 10, 10, 2)} stroke="#a0a0a0" strokeWidth=".8" /><path d="M24 41h32v17H24z" fill="#2b2f2d" /></>)}
      {kind === "navy2" && (<><path d="M1.500 21h77v3h-77z" fill="#26295c" /><path d={lines(8, 36, y + 13, 32, 5)} stroke="#8aa0c6" /></>)}
      {kind === "blue" && (<><path d={lines(12, 56, y + 7, 24, 2.600)} stroke="#5d83b8" strokeWidth="1.500" /><path d="M1.500 44h77" stroke="#c9c9c9" /><path d={lines(8, 50, 54, 20, 2.500)} stroke="#8e8e8e" strokeWidth=".9" /></>)}
      {kind === "slide" && (<><path d="M8 25h48v37H8z" fill="#d9edf7" /><path d="M13 27h24" stroke="#c4373c" strokeWidth="2.500" /><path d="M27 39h16M29 43h12" stroke="#5b7ac2" strokeWidth="1.500" /><path d="M60 28h14M60 32h12" stroke="#38519e" strokeWidth="1.500" /></>)}
      {kind === "sheet" && (<><path d={lines(4, 16, y + 9, 48, 2.800) + lines(24, 14, y + 9, 48, 3)} stroke="#b2b2b2" strokeWidth=".9" /><path d={lines(42, 16, y + 9, 40, 3)} stroke="#d9a099" strokeWidth=".9" /></>)}
      {kind === "form" && (<><path d="M8 6h42v40H8z" stroke="#8790a8" /><path d={lines(12, 30, 20, 12, 3) + lines(8, 40, 58, 18, 3)} stroke="#a9a9b5" strokeWidth=".9" /><path d="M56 5v74" stroke="#ddd" /><path d="M62 8h12M62 16h12M62 24h10" stroke="#5f88c8" strokeWidth="2" /></>)}
      {kind === "links" && <path d={lines(6, 26, y + 9, 36, 3) + lines(44, 12, y + 8, 14, 2.500)} stroke="#a9b2e0" strokeWidth=".9" />}
      {kind === "pdf" && (<><path d="M8 22h8v40H8zM66 22h12v40H66z" fill="#d2d2d6" /><path d={lines(22, 40, y + 8, 14, 2.500) + lines(22, 40, y + 30, 12, 2.500)} stroke="#a3a3a3" strokeWidth=".8" /></>)}
      {m.badge && <svg x="50" y="49" width="30" height="30" overflow="visible">{m.badge}</svg>}
    </DockIcon>
  );
}

/* ---------- content ---------- */
const menus: [string, number][] = [["File", 43], ["Edit", 49], ["View", 61], ["History", 92], ["Bookmarks", 143], ["People", 88], ["Window", 102], ["Help", 58]];
const users = [
  ["admin", "administrator", "1203"],
  ["lxy", "administrator", "3358"],
  ["LMJ", "general user", "110"],
  ["p", "administrator", "123"],
];
const appGridColors = ["#e04a3f", "#e04a3f", "#e04a3f", "#4f9a62", "#4285f4", "#e4a73b", "#4f9a62", "#e4a73b", "#e4a73b"];

export default function App() {
  return (
    <Desktop>
      <GlobalStyle />
      <MenuBar>
        <Apple />
        <MenuNames>
          <AppName><Fit w={108}>Chrome</Fit></AppName>
          {menus.map(([t, w]) => <Fit key={t} w={w}>{t}</Fit>)}
        </MenuNames>
        <StatusArea>
          <Status>
            <S w={40} h={30}><path d="M9 27a9 9 0 0 1-2-17A13 13 0 0 1 32 10a9 9 0 0 1-1 17z" fill="#a6abb3" /><path d="M20 9l7 8h-4v7h-6v-7h-4z" fill="#edf2fa" /></S>
          </Status>
          <Status $ml={20}>
            <S w={40} h={32}><path d="M1 1h38L20 31z" fill="#b3b7be" /><path d="M8 4l4 9 4-8M18 13a3 3 0 1 0 5 0 3 3 0 1 0-5 0M23 5l3 7 2-6 3 4 2-6M20 19v8" stroke="#e6eaf1" strokeWidth="2" /></S>
          </Status>
          <DateChip $ml={23}><Fit w={61}>Jan 8</Fit></DateChip>
          <Status $ml={23}>
            <S w={40} h={30}><path d="M2 11a26 26 0 0 1 36 0M8 17.500a17 17 0 0 1 24 0M14 23a9 9 0 0 1 12 0" stroke="#353b44" strokeWidth="3" /><circle cx="20" cy="27" r="2.800" fill="#353b44" /></S>
          </Status>
          <Status $ml={25}>
            <S w={32} h={22}><rect width="32" height="22" fill="#f3f1f2" /><path d="M0 1.500h32M0 5h32M0 8.500h32M0 12h32M0 15.500h32M0 19h32M0 21.500h32" stroke="#b5283a" strokeWidth="1.800" /><rect width="16" height="12" fill="#2f3468" /><path d="M2 3h13M2 6h13M2 9h13" stroke="#c9cce0" strokeWidth="1" strokeDasharray="1 2" /></S>
          </Status>
          <Status $ml={33}>
            <S w={20} h={32}><path d="m2 9 15 14-7.500 7.500V1.500L17 9 2 23" stroke="#353b44" strokeWidth="1.800" /></S>
          </Status>
          <Status $ml={35}><Fit w={50}>56%</Fit></Status>
          <Status $ml={9}>
            <S w={48} h={24}><rect x="1" y="1" width="38" height="22" rx="3" stroke="#353b44" strokeWidth="2" /><rect x="4" y="4" width="18" height="16" fill="#353b44" /><path d="M42 8c4 1 4 7 0 8z" fill="#353b44" /></S>
          </Status>
          <Status $ml={39}><Fit w={163}>Tue 5:04 PM</Fit></Status>
          <Status $ml={46}>
            <S w={30} h={30}><circle cx="12" cy="12" r="10" stroke="#353b44" strokeWidth="2.600" /><path d="m19 20 9 9" stroke="#353b44" strokeWidth="3.200" /></S>
          </Status>
          <Status $ml={33}>
            <S w={32}><circle cx="16" cy="16" r="15" fill="#232446" stroke="#17182c" strokeWidth="2" /><path d="M16 3a13 13 0 0 1 10 22L16 16z" fill="#4a3f9e" /><path d="M5 9a13 13 0 0 1 11-6v13z" fill="#93367f" /><path d="M6 25 16 16l6 11a13 13 0 0 1-16-2z" fill="#2176b8" /><path d="m6 12 10 4 9-6M16 16l-6 9M16 16l4 10" stroke="#b9ecf5" strokeWidth="1.500" /><circle cx="16" cy="16" r="2.500" fill="#e6fbff" /></S>
          </Status>
          <Status $ml={24}>
            <S w={36} h={22}><path d="M0 3h4M8 3h28M0 11h4M8 11h22M0 19h4M8 19h28" stroke="#353b44" strokeWidth="4" /></S>
          </Status>
        </StatusArea>
      </MenuBar>

      <SuggestBox><Fit w={99}>235881757</Fit></SuggestBox>

      <Window>
        <TabStrip>
          <Lights>
            <Light $c="#ed6a5e" $b="#d95a4f" />
            <Light $c="#f5bf4f" $b="#dca63c" />
            <Light $c="#61c554" $b="#50ab43" />
          </Lights>
          <Tab>
            <S w={33} h={32}>
              <path d="m7 0 6 8-6 7-6-7z" fill="#1d56b8" />
              <path d="m1 13 6 5 6-5M1 18l6 5 6-5M1 23l6 6 6-6" stroke="#5f8ccb" strokeWidth="2.200" />
              <path d="M15 9.500h17M15 12h17M15 14.500h17" stroke="#a8c1e6" strokeWidth="1.800" strokeDasharray="3 1" /><path d="M15 20h16M15 22.500h16M15 25h16" stroke="#c6d7ee" strokeWidth="1.800" strokeDasharray="3 1" />
            </S>
            <TabTitle><Fit w={350}>Juli wire rope background man</Fit></TabTitle>
            <TabClose width="18" height="18" viewBox="0 0 18 18"><path d="m2 2 14 14M16 2 2 16" stroke="#5f6368" strokeWidth="2.600" /></TabClose>
          </Tab>
          <NewTab><S w={26}><path d="M13 1v24M1 13h24" stroke="#5f6368" strokeWidth="3" /></S></NewTab>
        </TabStrip>

        <Toolbar>
          <NavIcons>
            <S w={34}><path d="M31 17H6M17 5 5 17l12 12" stroke="#5f6368" strokeWidth="2.800" /></S>
            <S w={34}><path d="M3 17h25M17 5l12 12-12 12" stroke="#babcbe" strokeWidth="2.800" /></S>
            <S w={34}><path d="M27.500 10A12 12 0 1 0 29 21" stroke="#5f6368" strokeWidth="2.800" /><path d="M30 3v11H19z" fill="#5f6368" /></S>
            <S w={34}><path d="M3.500 17.500 17 4l13.500 13.500M7.500 15v14.500h19V15" stroke="#5f6368" strokeWidth="2.800" strokeLinejoin="round" /></S>
          </NavIcons>
          <Omnibox>
            <S w={30}><circle cx="15" cy="15" r="12.600" stroke="#5f6368" strokeWidth="2.500" /><path d="M15 13v8M15 8v3" stroke="#5f6368" strokeWidth="2.600" /></S>
            <Url>
              <Fit w={117}>localhost</Fit>
              <Muted><Fit w={204}>:8081/#/deluser</Fit></Muted>
            </Url>
            <OmniIcons>
              <S w={30} h={20}><path d="M8.500 1a8.500 8.500 0 0 1 8 6H29v6h-2.500v6H20v-6h-3.500a8.500 8.500 0 1 1-8-12zm0 6a3 3 0 1 0 0 6 3 3 0 0 0 0-6z" fill="#5f6368" fillRule="evenodd" /></S>
              <S w={30}><path d="M3 1h10l6 22H3a2 2 0 0 1-2-2V3a2 2 0 0 1 2-2z" fill="#5f6368" /><path d="M15 6h12a2 2 0 0 1 2 2v18a2 2 0 0 1-2 2H17l-2-5" stroke="#5f6368" strokeWidth="1.800" /><path d="M13 8.500A4.300 4.300 0 1 0 13.500 13H9.500" stroke="#fff" strokeWidth="1.900" /><path d="M17.500 12.500h9M22 10.500v2M24.500 12.500c-1 4-3 6.500-6 8M19.500 15c1 2.500 3 4.500 5.500 6" stroke="#5f6368" strokeWidth="1.500" /></S>
              <S w={30}><path d="m15 3 3.600 8.400 9 .8-6.800 6 2 8.900-7.800-4.700-7.800 4.700 2-8.900-6.800-6 9-.8z" stroke="#5f6368" strokeWidth="2.500" /></S>
            </OmniIcons>
          </Omnibox>
          <Pocket><S w={32} h={28}><path d="M3 0h26a3 3 0 0 1 3 3v9a16 16 0 0 1-32 0V3a3 3 0 0 1 3-3z" fill="#5b5b5d" /><path d="m8.500 10 7.500 7.200 7.500-7.200" stroke="#fff" strokeWidth="4" strokeLinecap="round" /></S></Pocket>
          <Separator $ml={32} />
          <Avatar>j</Avatar>
          <S w={8} h={28}><g fill="#5f6368"><circle cx="4" cy="4" r="3.300" /><circle cx="4" cy="14" r="3.300" /><circle cx="4" cy="24" r="3.300" /></g></S>
        </Toolbar>

        <Bookmarks>
          <Bookmark $gap={16}>
            <S w={32}>
              {appGridColors.map((c, i) => (
                <rect key={i} x={3 + (i % 3) * 10} y={3 + Math.floor(i / 3) * 10} width="6" height="6" fill={c} />
              ))}
            </S>
            <Fit w={57}>Apps</Fit>
          </Bookmark>
          <Bookmark><Folder /><Fit w={195}>Imported From IE</Fit></Bookmark>
          <Bookmark><Doc /><Fit w={219}>Chinese-to-English</Fit></Bookmark>
          <Bookmark><Soku>SO<SokuLow>KU</SokuLow></Soku><Fit w={53}>soku</Fit></Bookmark>
          <Bookmark>
            <S w={32}><path d="M16 2c8.500 0 15.500 5.800 15.500 13S24.500 28 16 28c-1.300 0-2.500 0-3.700-.4L6 31l1-5.400C3 23.200.5 19.500.5 15 .5 7.800 7.500 2 16 2z" fill="#52a93c" /><circle cx="11" cy="11.500" r="2.200" fill="#fff" /><circle cx="21" cy="11.500" r="2.200" fill="#fff" /></S>
            <Fit w={143}>WeChat web</Fit>
          </Bookmark>
          <Bookmark>
            <S w={32}><circle cx="16" cy="16" r="14.500" fill="#e4eaf1" stroke="#8ca2bd" strokeWidth="2.500" /><circle cx="16" cy="16" r="10" fill="#b4c4d6" stroke="#7f97b5" strokeWidth="1.500" /><path d="M16 8c5 2 6 7 2 9v4h3v3H11v-3h3v-4c-4-2-3-7 2-9z" fill="#2d5583" /></S>
            <Fit w={215}>北京交通大学教务...</Fit>
          </Bookmark>
          <Bookmark $ml={12}><Doc /><Fit w={151}>URP C server</Fit></Bookmark>
          <Bookmark><Folder /><Fit w={36}>Uni</Fit></Bookmark>
          <Bookmark $ml={1}><Folder /><Fit w={67}>Travel</Fit></Bookmark>
          <Bookmark>
            <S w={32}><rect x="1.500" y="1.500" width="29" height="29" fill="#fff" stroke="#2b39d8" strokeWidth="3" /><g fill="#2b39d8"><ellipse cx="12.500" cy="8.500" rx="2.600" ry="3.600" /><ellipse cx="19.500" cy="8.500" rx="2.600" ry="3.600" /><ellipse cx="7.500" cy="14" rx="2.400" ry="3.300" /><ellipse cx="24.500" cy="14" rx="2.400" ry="3.300" /><path d="M16 13c4 0 4 4 7 6.500 4 3.500 1 8-3 7.500-3-.4-5-.4-8 0-4 .5-7-4-3-7.500C12 17 12 13 16 13z" /></g></S>
            <Fit w={207}>grey's anatomy ch</Fit>
          </Bookmark>
          <Bookmark><TaoTile $c="#e8683a">淘</TaoTile><Fit w={64}>lotion</Fit></Bookmark>
          <Bookmark><TileIcon $c="#ad1f1a">T</TileIcon><Fit w={194}>nice blouse store</Fit></Bookmark>
          <Bookmark $ml={-1}><GTile $c="#cf4f37">g</GTile><Fit w={139}>Cities check</Fit></Bookmark>
          <Bookmark><Folder /><Fit w={88}>Classes</Fit></Bookmark>
          <Bookmark $ml={27}><Fit w={16}>»</Fit></Bookmark>
          <Separator $ml={-14} />
          <Bookmark $ml={-13}><Folder /><Fit w={197}>Other Bookmarks</Fit></Bookmark>
        </Bookmarks>

        <Page>
          <Sidebar>
            <Logo>J&amp;L</Logo>
            <NavTop $gap={23}><NavIcon><House /></NavIcon><span>Home</span></NavTop>
            <NavTop $gap={23}><NavIcon><Database />Data</NavIcon><span>processing</span><Caret ml={24} /></NavTop>
            <NavSub $indent={80}>order</NavSub>
            <NavSub $indent={80}>View test record</NavSub>
            <NavSub $indent={80}>Error handling list</NavSub>
            <NavTop $gap={31}><NavIcon $pull={2}><Chart />Wire</NavIcon><span>report</span></NavTop>
            <NavTop $gap={30}><NavIcon $pull={1}><Books /></NavIcon><span>wire rope</span></NavTop>
            <NavTop $gap={23}><NavIcon $pull={2}><Person /></NavIcon><span>User Management</span><Caret ml={-2} /></NavTop>
            <NavSub $indent={95} $active>user list</NavSub>
            <NavSub $indent={95}>Machine management</NavSub>
            <NavSub $indent={95}>Report statistics</NavSub>
            <NavSub $indent={95}>change Password</NavSub>
            <NavLogout $gap={23}><NavIcon $drop={-1}><House /></NavIcon><span>exit</span></NavLogout>
          </Sidebar>
          <Content>
            <Head>
              <Title>user list</Title>
              <HeadButton $w={168}><Refresh />Add user</HeadButton>
              <HeadButton $w={232}><Refresh />refresh the list</HeadButton>
            </Head>
            <TableCard>
              <Table>
                <Row $head>
                  {["username", "Permission", "class", "modify", "reset Password", "delete users"].map((t) => <Cell key={t} $kind="head">{t}</Cell>)}
                </Row>
                {users.map((u) => (
                  <Row key={u[0]}>
                    {u.map((t, i) => <Cell key={i} $kind="text">{t}</Cell>)}
                    {["modify", "Reset", "delete"].map((t) => <Cell key={t} $kind="link">{t}</Cell>)}
                  </Row>
                ))}
              </Table>
            </TableCard>
          </Content>
        </Page>

        <Dialog>
          <DialogHead>
            <DialogTitle>User added</DialogTitle>
            <CloseIcon width="24" height="24" viewBox="0 0 24 24"><path d="m2 2 20 20M22 2 2 22" stroke="#909399" strokeWidth="2" /></CloseIcon>
          </DialogHead>
          <Field><FieldLabel>username:</FieldLabel><Placeholder>请输入用户名</Placeholder></Field>
          <Field><FieldLabel>class:</FieldLabel><Placeholder>请输入班级</Placeholder></Field>
          <Field><FieldLabel>user password:</FieldLabel><Placeholder>请输入用户密码</Placeholder></Field>
          <Radios>
            <Radio $on $w={420}>administrator</Radio>
            <Radio $w={210}>general user</Radio>
          </Radios>
          <Actions>
            <ActionButton $w={166}>cancel</ActionButton>
            <ActionButton $primary $w={210}>determine</ActionButton>
          </Actions>
        </Dialog>
      </Window>

      <Dock>
        {apps.map((a) => <Slot key={a.id} $dot={a.dot}>{a.art}</Slot>)}
        <DockRule />
        {minis.map((m) => <Slot key={m.id}><MiniWindow m={m} /></Slot>)}
        <Slot>
          <DockIcon>
            <defs><linearGradient id="tr" x1="0" x2="1"><stop stopColor="#cfcac4" /><stop offset=".4" stopColor="#f1efec" /><stop offset="1" stopColor="#bdb6ae" /></linearGradient></defs>
            <path d="m14 12 7-8 8 4 8-7 7 7 9-4 10 10-6 6H20z" fill="#e9e9ea" /><path d="m20 8 6 8 7-6M40 5l3 10 8-5" stroke="#5a6b7c" strokeWidth="2.500" /><path d="m52 7 6 8" stroke="#c26a52" strokeWidth="2.500" />
            <path d="M11 14c8 5 50 5 58 0l-7 60c-4 6-40 6-44 0z" fill="url(#tr)" opacity=".95" />
            <ellipse cx="40" cy="15" rx="29" ry="5" stroke="#f5f3f0" strokeWidth="1.500" />
          </DockIcon>
        </Slot>
      </Dock>
    </Desktop>
  );
}
